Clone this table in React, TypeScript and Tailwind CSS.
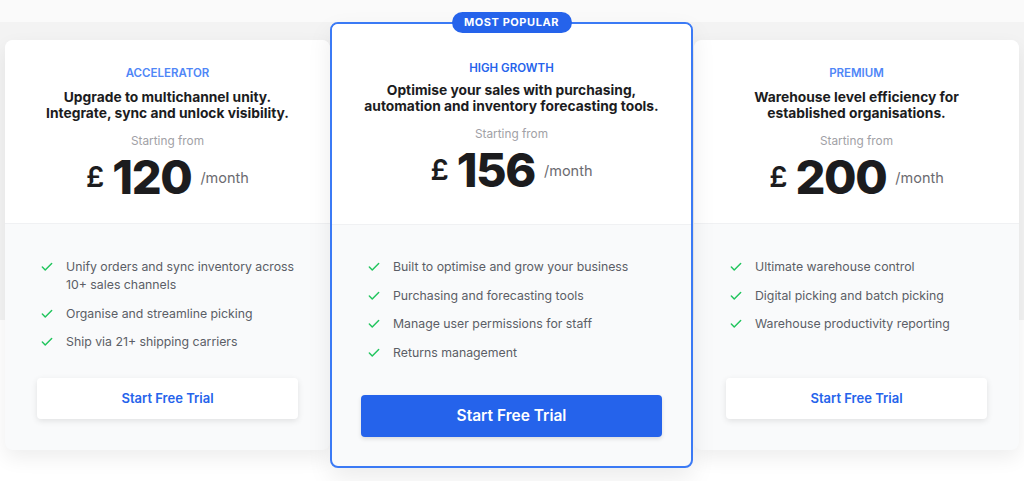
import { Check } from 'lucide-react';

interface Plan {
  name: string;
  heading: string[];
  price: string;
  features: string[][];
  featured?: boolean;
}

const plans: Plan[] = [
  {
    name: 'ACCELERATOR',
    heading: ['Upgrade to multichannel unity.', 'Integrate, sync and unlock visibility.'],
    price: '120',
    features: [
      ['Unify orders and sync inventory across', '10+ sales channels'],
      ['Organise and streamline picking'],
      ['Ship via 21+ shipping carriers'],
    ],
  },
  {
    name: 'HIGH GROWTH',
    heading: ['Optimise your sales with purchasing,', 'automation and inventory forecasting tools.'],
    price: '156',
    featured: true,
    features: [
      ['Built to optimise and grow your business'],
      ['Purchasing and forecasting tools'],
      ['Manage user permissions for staff'],
      ['Returns management'],
    ],
  },
  {
    name: 'PREMIUM',
    heading: ['Warehouse level efficiency for', 'established organisations.'],
    price: '200',
    features: [
      ['Ultimate warehouse control'],
      ['Digital picking and batch picking'],
      ['Warehouse productivity reporting'],
    ],
  },
];

function PlanCard({ plan }: { plan: Plan }) {
  const featured = !!plan.featured;

  return (
    <div
      className={
        featured
          ? 'relative w-[363px] h-[446px] shrink-0 flex flex-col rounded-lg border-2 border-[#3b7af5] bg-[#f9fafb] shadow-[0_10px_24px_rgba(0,0,0,0.08)] z-10'
          : 'w-[325px] h-[410px] shrink-0 flex flex-col rounded-lg bg-[#f9fafb] overflow-hidden shadow-[0_8px_20px_rgba(0,0,0,0.07)]'
      }
    >
      {featured && (
        <div className="absolute -top-[12px] left-1/2 -translate-x-1/2 h-[21px] w-[120px] rounded-full bg-[#2563eb] flex items-center justify-center text-white text-[11px] font-bold tracking-wider leading-none">
          MOST POPULAR
        </div>
      )}

      {/* top: plan name, pitch and price */}
      <div
        className={`bg-white flex flex-col items-center text-center border-b border-[#f0f1f3] ${
          featured ? 'h-[201px] pt-[36px] rounded-t-md' : 'h-[184px] pt-[25px]'
        }`}
      >
        <div
          className={`text-[11.5px] leading-[16px] font-semibold ${
            featured ? 'text-[#2563eb]' : 'text-[#4f86f7]'
          }`}
        >
          {plan.name}
        </div>
        <h3
          className={`text-[13.8px] leading-[16px] font-bold text-[#1c1c1e] ${
            featured ? 'mt-[6px]' : 'mt-[8px]'
          }`}
        >
          {plan.heading.map((line) => (
            <span key={line} className="block whitespace-nowrap">
              {line}
            </span>
          ))}
        </h3>
        <div className="mt-[12px] text-[11.8px] leading-[16px] text-[#a1a1a6]">Starting from</div>
        <div className="mt-[3px] flex items-center h-[48px] text-[#1c1c1e]">
          <span className="text-[29px] leading-none font-semibold">£</span>
          <span className="ml-[8px] text-[47px] leading-none font-extrabold tracking-[-0.03em]">
            {plan.price}
          </span>
          <span className="ml-[9px] mt-[4px] text-[14.5px] leading-none text-[#6b6b70]">/month</span>
        </div>
      </div>

      {/* bottom: features and call to action */}
      <div
        className={`flex-1 flex flex-col ${
          featured ? 'px-[29px] pt-[33px] pb-[29px]' : 'px-8 pt-[34px] pb-[31px]'
        }`}
      >
        <ul className={`flex flex-col gap-[10.5px] ${featured ? 'pl-[6px]' : 'pl-[3px]'}`}>
          {plan.features.map((f) => (
            <li key={f[0]} className="flex items-start gap-[12px] text-[12.3px] leading-[18px] text-[#5b5e66]">
              <Check className="h-[14px] w-[14px] mt-[2px] shrink-0 text-[#22c55e]" strokeWidth={2.5} />
              <span>
                {f.map((line) => (
                  <span key={line} className="block whitespace-nowrap">
                    {line}
                  </span>
                ))}
              </span>
            </li>
          ))}
        </ul>
        <button
          className={
            featured
              ? 'mt-auto h-[42px] w-full rounded-[4px] bg-[#2563eb] text-white text-[15.5px] font-semibold shadow-[0_2px_4px_rgba(0,0,0,0.12)]'
              : 'mt-auto h-[41px] w-full rounded-[4px] bg-white text-[#2563eb] text-[13px] font-semibold shadow-[0_2px_6px_rgba(0,0,0,0.1)]'
          }
        >
          Start Free Trial
        </button>
      </div>
    </div>
  );
}

export default function App() {
  return (
    <div
      className="w-[1024px] h-[481px] overflow-hidden bg-[linear-gradient(to_bottom,#fafafa_0px,#fafafa_22px,#f3f3f3_22px,#f3f3f3_320px,#ffffff_320px)]"
      style={{ fontFamily: 'Inter, "Noto Sans", sans-serif' }}
    >
      <div className="flex items-center pl-[5px] pt-[22px] h-[468px]">
        <PlanCard plan={plans[0]} />
        <PlanCard plan={plans[1]} />
        <div className="ml-[1px]">
          <PlanCard plan={plans[2]} />
        </div>
      </div>
    </div>
  );
}
